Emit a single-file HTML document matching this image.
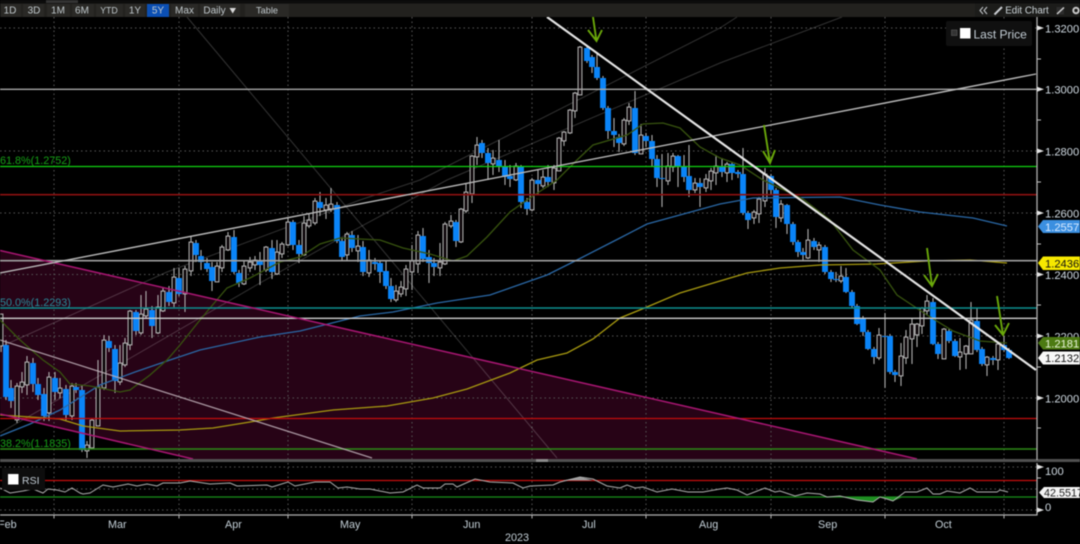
<!DOCTYPE html>
<html>
<head>
<meta charset="utf-8">
<style>
html,body{margin:0;padding:0;background:#000;width:1080px;height:544px;overflow:hidden}
svg{display:block;position:absolute;left:0;top:0;filter:blur(.45px)}
text{font-family:"Liberation Sans",sans-serif}
.tb{font-size:10px;fill:#c0c8cc;text-anchor:middle}
.ax{font-size:11.2px;fill:#d0dae2}
.mo{font-size:10.8px;fill:#c4d0d8}
.fib{font-size:10.8px}
</style>
</head>
<body>
<svg width="1080" height="544" viewBox="0 0 1080 544" xmlns="http://www.w3.org/2000/svg">
<rect width="1080" height="544" fill="#000"/>
<!-- Pink channel -->
<polygon points="0,250 917,459 193,459 0,414" fill="#270316"/>
<!-- Grid -->
<g stroke="#565656" stroke-width="1" stroke-dasharray="1.5 3" fill="none">
<path d="M0 28H1037M0 151H1037M0 213H1037M0 274.5H1037M0 336H1037M0 398H1037"/>
<path d="M54 17V459M179 17V459M288 17V459M412 17V459M532 17V459M646 17V459M771 17V459M885 17V459M1004 17V459"/>
<path d="M0 467H1037M0 489H1037M0 510H1037M54 463V515M179 463V515M288 463V515M412 463V515M532 463V515M646 463V515M771 463V515M885 463V515M1004 463V515"/>
</g>
<!-- Thin grey lines -->
<g stroke="#fff" stroke-opacity=".2" stroke-width="1" fill="none">
<path d="M187 17L557 458"/>
<path d="M0 433L127 360L260 283L360 227L447 180L720 63L842 17"/>
<path d="M0 347L167 272L360 200L420 180L720 28L737 17"/>
</g>
<!-- Candle wicks -->
<path stroke="#aeaeae" stroke-width="1.1" fill="none" d="M1 315V352M6 340V400M11 380V408M17 383V423M22 372V393M27 356V395M33 358V392M38 378V400M44 388V421M49 372V421M55 372V400M60 378V398M66 385V420M72 383V420M76 383V393M82 385V452M87 441V458M92 418V449M98 360V425M104 335V390M109 336V352M115 345V393M120 345V385M125 338V367M130 310V350M136 310V335M141 295V335M146 291V318M152 306V338M158 295V334M163 288V312M169 286V306M174 268V307M179 268V296M185 266V312M191 236V276M196 240V262M201 250V270M207 258V272M212 262V291M217 262V282M222 245V272M228 232V251M234 230V274M239 270V287M244 260V285M250 257V272M255 256V270M260 252V285M266 246V272M272 240V279M277 240V275M282 242V258M288 217V246M293 220V250M299 240V263M304 216V256M309 214V228M315 198V225M320 192V216M326 198V219M331 188V212M337 202V243M342 238V260M347 232V261M352 231V252M358 235V262M363 241V276M369 250V277M375 258V270M380 260V283M386 260V289M391 278V302M396 285V302M401 281V297M406 265V296M412 245V290M418 231V273M423 228V262M429 250V283M434 258V276M440 243V276M445 222V265M451 215V228M456 220V247M461 208V243M466 183V213M472 155V203M477 137V165M482 140V158M488 148V180M493 150V175M499 140V172M505 160V185M510 165V187M516 163V181M521 165V208M527 198V215M532 178V211M538 170V195M543 170V188M548 165V187M554 165V190M559 137V171M564 131V146M570 109V134M575 92V118M580 46V95M587 47V63M592 55V73M597 52V80M603 76V110M608 106V139M614 118V147M619 134V152M624 118V146M629 103V125M635 91V155M641 124V154M646 133V147M652 135V166M657 155V187M662 154V207M668 153V185M673 153V172M678 155V187M684 155V182M689 145V197M695 178V193M700 178V207M706 174V192M711 168V190M716 155V185M722 158V177M727 162V182M732 162V180M738 170V178M743 148V215M748 211V229M754 210V224M759 197V223M765 168V207M771 174V195M776 188V228M781 200V222M787 204V234M793 222V245M798 240V257M803 248V260M808 229V259M814 238V250M819 242V262M825 245V274M831 270V282M836 272V282M841 266V283M846 268V293M852 290V308M857 304V325M863 316V336M868 330V350M874 347V364M879 328V360M885 313V388M890 334V374M895 370V382M901 343V386M906 330V364M912 318V364M917 323V347M922 307V334M927 295V315M933 298V345M938 342V359M944 328V359M949 329V343M955 339V357M960 338V370M966 345V369M971 302V354M977 308V352M982 347V366M987 356V376M993 356V365M998 343V370M1004 336V352M1009 348V359"/>
<!-- White hollow bodies -->
<defs>
<path id="wb" d="M1 316V344M17 388V418M22 384V385M27 364V383M49 379V411M60 390V391M72 388V414M87 447V449M92 422V446M98 389V424M104 342V386M120 365V380M125 345V363M130 313V343M141 316V331M146 311V314M158 309V331M163 293V309M174 279V301M185 271V292M191 244V269M217 268V280M222 249V266M228 238V248M244 268V282M250 264V266M255 262V263M266 249V268M277 254V272M282 246V252M288 224V243M304 225V253M309 222V224M315 203V221M326 207V208M331 206V207M347 236V253M358 248V249M369 262V271M396 293V298M401 289V292M406 271V287M412 263V270M418 237V262M440 264V266M445 226V262M451 223V224M461 211V240M466 194V209M472 158V192M477 147V155M493 160V162M516 168V178M532 182V208M543 179V184M554 170V181M559 140V169M564 134V139M570 112V131M575 95V109M580 49V93M624 122V142M629 109V119M641 137V152M668 168V179M673 158V165M695 185V188M706 181V186M711 173V179M716 168V171M727 166V171M754 214V216M759 201V212M765 176V199M781 206V216M808 242V256M819 247V248M841 278V279M879 337V356M901 358V374M906 339V356M912 326V337M917 326V333M922 310V324M927 303V309M944 331V357M960 354V355M966 348V352M971 322V352M987 359V363M998 346V358"/>
</defs>
<use href="#wb" fill="none" stroke="#bdbdbd" stroke-width="4.8" stroke-linecap="square"/>
<use href="#wb" fill="none" stroke="#0c0508" stroke-width="2.8" stroke-linecap="square"/>
<!-- Blue bodies -->
<path stroke="#0a84f8" stroke-width="5.9" fill="none" d="M6 345V397M11 388V401M33 363V384M38 384V395M44 394V416M55 378V392M66 389V415M76 387V390M82 390V450M109 341V348M115 349V381M136 312V331M152 310V326M169 292V302M179 278V294M196 243V255M201 256V262M207 263V269M212 267V281M234 237V272M239 273V283M260 261V265M272 248V272M293 222V245M299 245V254M320 202V208M337 205V241M342 241V257M352 235V248M363 247V272M375 262V264M380 263V272M386 271V286M391 286V299M423 236V259M429 257V263M434 263V267M456 222V241M482 143V153M488 153V163M499 160V167M505 167V177M510 176V179M521 167V202M527 202V209M538 180V184M548 177V182M587 48V61M592 57V67M597 67V78M603 78V108M608 108V131M614 131V135M619 137V143M635 108V153M646 136V141M652 141V159M657 159V178M662 178V179M678 156V167M684 167V177M689 176V190M700 183V187M722 167V172M732 164V173M738 172V174M743 174V213M748 213V220M771 176V190M776 190V217M787 205V224M793 224V242M798 242V252M803 252V255M814 241V247M825 247V272M831 272V279M836 279V280M846 277V292M852 292V306M857 306V324M863 318V332M868 332V349M874 349V357M885 336V337M890 336V372M895 372V375M933 302V344M938 344V354M949 331V341M955 341V356M977 321V350M982 349V364M993 358V360M1004 345V350M1009 350V358"/>
<!-- Moving averages -->
<g fill="none" stroke-width="1.3">
<polyline stroke="#2a68a6" points="0,436 30,424 60,410 100,385 135,372 170,360 200,350 260,337 300,331 360,316 393,312 437,303 490,295 547,275 577,260 620,238 647,224 720,204 753,198 840,197 880,205 920,212 973,218 1007,226"/>
<polyline stroke="#a89a10" points="0,415 60,419 83,426 120,431 180,430 213,428 250,422 273,418 333,410 360,408 387,406 433,398 467,389 510,373 537,360 567,353 593,339 620,318 647,307 680,293 720,281 747,273 780,268 820,265 877,264 927,261 970,260 1007,263"/>
<polyline stroke="#38540f" points="0,320 20,340 43,360 60,372 70,384 90,386 120,392 130,390 150,375 167,360 180,345 200,320 210,308 227,288 250,278 280,262 300,257 320,244 340,238 360,239 380,240 403,248 430,254 453,261 467,256 487,237 510,212 527,200 557,180 577,160 593,145 627,135 643,124 663,123 680,128 700,147 720,158 740,165 763,180 803,199 830,220 853,250 880,270 897,295 927,315 953,331 980,341 1007,343"/>
</g>
<!-- Horizontal levels -->
<g fill="none">
<path d="M0 89.3H1037" stroke="#a8a8a8" stroke-width="1.4"/>
<path d="M0 166.5H1037" stroke="#10d410" stroke-width="1.3"/>
<path d="M0 194.7H1037" stroke="#8c1010" stroke-width="1.6"/>
<path d="M0 260.7H1037" stroke="#a0a0a0" stroke-width="1.7"/>
<path d="M0 308H1037" stroke="#0d8f8f" stroke-width="1.6"/>
<path d="M0 318.3H1037" stroke="#cfcfcf" stroke-width="1.3"/>
<path d="M0 418.5H1037" stroke="#c40c0c" stroke-width="1.3"/>
<path d="M0 449H1037" stroke="#2c8a16" stroke-width="1.4"/>
</g>
<!-- Pink channel edges -->
<path d="M0 250.5L917 459M0 414L193 459" stroke="#a81672" stroke-width="1.5" fill="none"/>
<!-- White trendlines -->
<path d="M0 273L1036 74" stroke="#b8b8b8" stroke-width="1.4" fill="none"/>
<path d="M0 340L372 458" stroke="#c0b0b8" stroke-opacity=".85" stroke-width="1.3" fill="none"/>
<path d="M547 17L1036 370" stroke="#e4e4e4" stroke-width="2.2" fill="none"/>
<!-- Green arrows -->
<g stroke="#6aa80a" stroke-width="1.9" fill="none">
<path d="M593 17L596.500 41M588 30L596.500 41L602 30"/>
<path d="M764 125L770 163M763 151L770 163L775 150"/>
<path d="M927 248L932 286M924 275L932 286L938 274"/>
<path d="M997 296L1003 335M995 325L1003 335L1009 323"/>
</g>
<!-- Fib labels -->
<text class="fib" x="0" y="164" fill="#16a016">61.8%(1.2752)</text>
<text class="fib" x="0" y="306" fill="#2a8a9a">50.0%(1.2293)</text>
<text class="fib" x="0" y="447" fill="#16a016">38.2%(1.1835)</text>
<!-- Toolbar -->
<rect x="0" y="0" width="1080" height="3.5" fill="#0c0c0c"/>
<rect x="46" y="0" width="32" height="3" fill="#333"/>
<rect x="0" y="3.5" width="1080" height="13.5" fill="#22211e"/>
<g fill="#2a2926">
<rect x="1" y="4" width="20" height="13"/><rect x="23" y="4" width="21" height="13"/><rect x="47" y="4" width="23" height="13"/><rect x="72" y="4" width="22" height="13"/><rect x="96" y="4" width="27" height="13"/><rect x="125" y="4" width="20" height="13"/><rect x="171" y="4" width="27" height="13"/><rect x="200" y="4" width="40" height="13"/><rect x="245" y="4" width="44" height="13"/>
</g>
<rect x="147" y="4" width="22" height="13" fill="#0b4fb4"/>
<text class="tb" x="10" y="13.5">1D</text>
<text class="tb" x="34" y="13.5">3D</text>
<text class="tb" x="58" y="13.5">1M</text>
<text class="tb" x="82" y="13.5">6M</text>
<text class="tb" x="109" y="13.5" style="font-size:8.8px">YTD</text>
<text class="tb" x="135" y="13.5">1Y</text>
<text class="tb" x="158" y="13.5">5Y</text>
<text class="tb" x="184.500" y="13.5">Max</text>
<text class="tb" x="214.500" y="13.5">Daily</text>
<path d="M229.500 8H236L232.700 13.500Z" fill="#d8d8d8"/>
<text class="tb" x="267" y="13.5" style="font-size:9.2px">Table</text>
<!-- Right toolbar -->
<rect x="975" y="3.500" width="105" height="13.500" fill="#1c1c1a"/>
<path d="M983 7L980 10.500L983 14M987 7L984 10.500L987 14" stroke="#c0c4c8" stroke-width="1.1" fill="none"/>
<path d="M994.500 14.500L1002 7" stroke="#c8ccd0" stroke-width="2" fill="none"/>
<text class="tb" x="1027" y="13.500" style="font-size:9.800px;fill:#ccd4d8">Edit Chart</text>
<rect x="1056.500" y="7" width="7.500" height="7.500" fill="#2c2c2c"/>
<path d="M1057 14L1064 7.500" stroke="#d0d0d0" stroke-width="1.500" fill="none"/>
<circle cx="1076" cy="10.500" r="2.700" fill="none" stroke="#c8c8c8" stroke-width="2"/>
<!-- Last Price legend -->
<rect x="946" y="21" width="86" height="25" rx="2" fill="#101010"/>
<rect x="951.500" y="30" width="5.500" height="5.500" fill="#333" stroke="#555" stroke-width=".7"/>
<rect x="960" y="28" width="10.500" height="10.500" fill="#fff"/>
<text x="973.500" y="38.500" style="font-size:12px;fill:#c4ced6">Last Price</text>
<!-- Separator -->
<rect x="0" y="459" width="1080" height="3" fill="#505050"/>
<rect x="536" y="459" width="12" height="3" fill="#8a8a8a"/>
<!-- RSI panel -->
<path d="M0 480.500H1037" stroke="#c80c0c" stroke-width="1.300" fill="none"/>
<path d="M0 497H1037" stroke="#18901a" stroke-width="1.300" fill="none"/>
<polygon points="845,497 857,500 873,502 880,497 887,499 893,501 903,497" fill="#1f8e22"/>
<polygon points="563,480.500 580,477 593,480.500" fill="#9a9a9a"/>
<polyline fill="none" stroke="#b0b0b0" stroke-width="1" points="0,488 10,493 23,491 33,489 43,493 48,489 57,490 65,492 72,488 80,493 83,494 90,493 103,485 113,487 128,484 137,486 147,484 157,486 163,483 180,483 190,481 210,484 230,483 237,486 267,485 272,487 288,482 295,486 315,482 330,482 338,488 347,487 360,489 370,489 390,493 403,492 417,485 423,488 440,488 445,484 453,484 457,487 475,479 490,482 513,483 523,488 530,486 553,485 560,482 580,477 593,479 607,486 620,488 627,485 635,488 643,487 657,492 672,489 688,492 703,492 720,489 727,488 737,490 747,495 765,488 775,492 780,491 795,496 807,493 820,494 827,497 840,496 857,500 873,502 880,497 887,499 893,501 905,492 917,492 927,488 933,494 940,494 947,491 960,493 970,488 977,492 987,492 997,492 1000,490 1008,492"/>
<rect x="2" y="468" width="43" height="22" fill="#0d0d0d"/>
<rect x="8" y="474" width="10.500" height="10.500" fill="#fff"/>
<text x="22" y="484" style="font-size:10.500px;fill:#c4ced6">RSI</text>
<!-- Axes -->
<path d="M1037 17V460M1037 463V515.500M0 515H1037" stroke="#b0b0b0" stroke-width="1.300" fill="none"/>
<path d="M54 515V518.500M179 515V518.500M288 515V518.500M412 515V518.500M532 515V518.500M646 515V518.500M771 515V518.500M885 515V518.500M1004 515V518.500" stroke="#b0b0b0" stroke-width="1" fill="none"/>
<path d="M1037 59H1041M1037 120H1041M1037 182H1041M1037 244H1041M1037 305H1041M1037 367H1041M1037 428H1041M1037 478H1041" stroke="#c0c0c0" stroke-width="1" fill="none"/>
<g fill="#e4e4e4">
<path d="M1037 25.500L1044 28L1037 30.500Z"/>
<path d="M1037 86.800L1044 89.300L1037 91.800Z"/>
<path d="M1037 148.500L1044 151L1037 153.500Z"/>
<path d="M1037 210.500L1044 213L1037 215.500Z"/>
<path d="M1037 272L1044 274.500L1037 277Z"/>
<path d="M1037 333.500L1044 336L1037 338.500Z"/>
<path d="M1037 395.500L1044 398L1037 400.500Z"/>
<path d="M1037 464.500L1044 467L1037 469.500Z"/>
<path d="M1037 507.500L1044 510L1037 512.500Z"/>
</g>
<text class="ax" x="1045" y="32.500">1.3200</text>
<text class="ax" x="1045" y="93.500">1.3000</text>
<text class="ax" x="1045" y="155.500">1.2800</text>
<text class="ax" x="1045" y="217.500">1.2600</text>
<text class="ax" x="1045" y="279">1.2400</text>
<text class="ax" x="1045" y="340.500">1.2200</text>
<text class="ax" x="1045" y="402.500">1.2000</text>
<text class="ax" x="1045" y="475">100</text>
<text class="ax" x="1045" y="511">0</text>
<!-- Price tags -->
<path d="M1038 226.500L1043 220H1080V233H1043Z" fill="#3b8fe0"/>
<text x="1045" y="231" style="font-size:11.200px;fill:#d8eaff">1.2557</text>
<path d="M1038 263L1043 256.500H1080V270H1043Z" fill="#f6e800"/>
<text x="1045" y="267.500" style="font-size:11.200px;fill:#111">1.2436</text>
<path d="M1038 343L1043 337H1080V349.500H1043Z" fill="#4c7a12"/>
<text x="1045" y="347.500" style="font-size:11.200px;fill:#e8f4d8">1.2181</text>
<path d="M1038 358L1043 351.500H1080V364.500H1043Z" fill="#f8f8f8"/>
<text x="1045" y="362" style="font-size:11.200px;fill:#111">1.2132</text>
<path d="M1039 492.500L1044 487H1080V498H1044Z" fill="#f4f4f4"/>
<text x="1044" y="496.500" style="font-size:10.800px;fill:#222">42.5517</text>
<!-- Month labels -->
<text class="mo" x="-2" y="528">Feb</text>
<text class="mo" x="108" y="528">Mar</text>
<text class="mo" x="225" y="528">Apr</text>
<text class="mo" x="340" y="528">May</text>
<text class="mo" x="463" y="528">Jun</text>
<text class="mo" x="582" y="528">Jul</text>
<text class="mo" x="699" y="528">Aug</text>
<text class="mo" x="818" y="528">Sep</text>
<text class="mo" x="935" y="528">Oct</text>
<text class="mo" x="505" y="541">2023</text>
</svg>
</body>
</html>
